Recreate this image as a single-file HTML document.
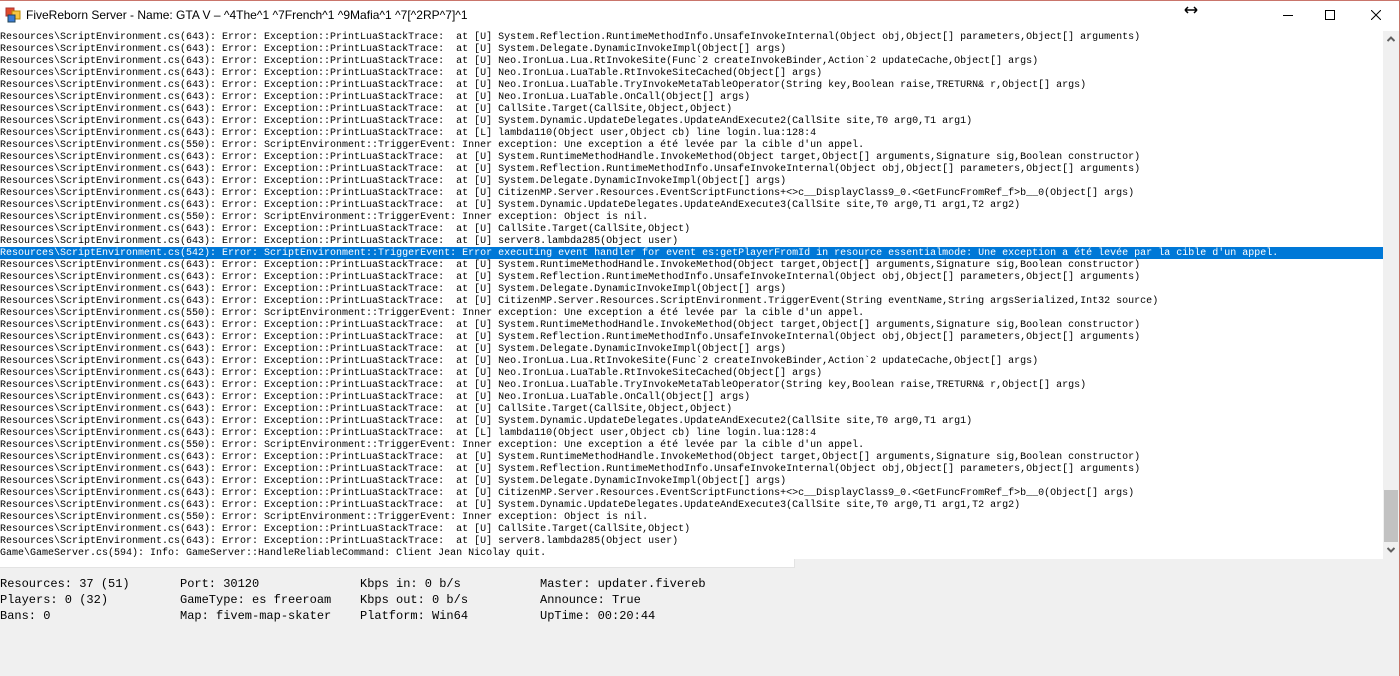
<!DOCTYPE html>
<html><head><meta charset="utf-8"><style>
*{margin:0;padding:0;box-sizing:border-box}
body{width:1400px;height:676px;background:#f0f0f0;position:relative;overflow:hidden;font-family:"Liberation Mono",monospace}
#border{position:absolute;left:0;top:0;width:1400px;height:676px;border:1px solid #c9756b;border-left:none;border-bottom:none;pointer-events:none;z-index:10}
#title{position:absolute;left:0;top:0;width:1400px;height:31px;background:#fff}
#title .t{position:absolute;left:26px;top:8px;font:12px "Liberation Sans",sans-serif;color:#000;white-space:pre}
#log{position:absolute;left:0;top:31px;width:1383px;height:528px;background:#fff;overflow:hidden}
#log div{height:12px;padding-top:2px;line-height:10px;font-size:10px;white-space:pre;color:#000;font-family:"Liberation Mono",monospace}
#log div.sel{background:#0078d7;color:#fff}
#lower{position:absolute;left:0;top:559px;width:795px;height:9px;background:#fff;border-bottom:1px solid #e3e3e3;border-right:1px solid #e3e3e3}
#sb{position:absolute;left:1383px;top:31px;width:16px;height:528px;background:#f0f0f0}
#thumb{position:absolute;left:1px;top:459px;width:14px;height:52px;background:#c2c2c2}
.st{position:absolute;font-size:12px;line-height:16px;white-space:pre;color:#000}
</style></head><body>
<div id="border"></div>
<div id="title">
<svg style="position:absolute;left:5px;top:7px" width="16" height="16" viewBox="0 0 16 16"><rect x="1" y="1" width="8" height="8" fill="#e04a2a" stroke="#a33" stroke-width="1"/><rect x="7" y="4" width="8" height="8" fill="#f5c542" stroke="#b80" /><rect x="3" y="8" width="7" height="7" fill="#3a7bd5" stroke="#245"/></svg>
<div class="t">FiveReborn Server - Name: GTA V – ^4The^1 ^7French^1 ^9Mafia^1 ^7[^2RP^7]^1</div>
<svg style="position:absolute;left:1184px;top:6px" width="14" height="8" viewBox="0 0 14 8"><path d="M1 4H13M1 4L4 1M1 4L4 7M13 4L10 1M13 4L10 7" stroke="#000" stroke-width="1.5" fill="none"/></svg>
<div style="position:absolute;left:1283px;top:15px;width:10px;height:1px;background:#000"></div>
<div style="position:absolute;left:1325px;top:10px;width:10px;height:10px;border:1px solid #000"></div>
<svg style="position:absolute;left:1371px;top:10px" width="10" height="10" viewBox="0 0 10 10"><path d="M0 0L10 10M10 0L0 10" stroke="#000" stroke-width="1"/></svg>
</div>
<div id="log">
<div>Resources\ScriptEnvironment.cs(643): Error: Exception::PrintLuaStackTrace:  at [U] System.Reflection.RuntimeMethodInfo.UnsafeInvokeInternal(Object obj,Object[] parameters,Object[] arguments)</div>
<div>Resources\ScriptEnvironment.cs(643): Error: Exception::PrintLuaStackTrace:  at [U] System.Delegate.DynamicInvokeImpl(Object[] args)</div>
<div>Resources\ScriptEnvironment.cs(643): Error: Exception::PrintLuaStackTrace:  at [U] Neo.IronLua.Lua.RtInvokeSite(Func`2 createInvokeBinder,Action`2 updateCache,Object[] args)</div>
<div>Resources\ScriptEnvironment.cs(643): Error: Exception::PrintLuaStackTrace:  at [U] Neo.IronLua.LuaTable.RtInvokeSiteCached(Object[] args)</div>
<div>Resources\ScriptEnvironment.cs(643): Error: Exception::PrintLuaStackTrace:  at [U] Neo.IronLua.LuaTable.TryInvokeMetaTableOperator(String key,Boolean raise,TRETURN&amp; r,Object[] args)</div>
<div>Resources\ScriptEnvironment.cs(643): Error: Exception::PrintLuaStackTrace:  at [U] Neo.IronLua.LuaTable.OnCall(Object[] args)</div>
<div>Resources\ScriptEnvironment.cs(643): Error: Exception::PrintLuaStackTrace:  at [U] CallSite.Target(CallSite,Object,Object)</div>
<div>Resources\ScriptEnvironment.cs(643): Error: Exception::PrintLuaStackTrace:  at [U] System.Dynamic.UpdateDelegates.UpdateAndExecute2(CallSite site,T0 arg0,T1 arg1)</div>
<div>Resources\ScriptEnvironment.cs(643): Error: Exception::PrintLuaStackTrace:  at [L] lambda110(Object user,Object cb) line login.lua:128:4</div>
<div>Resources\ScriptEnvironment.cs(550): Error: ScriptEnvironment::TriggerEvent: Inner exception: Une exception a été levée par la cible d'un appel.</div>
<div>Resources\ScriptEnvironment.cs(643): Error: Exception::PrintLuaStackTrace:  at [U] System.RuntimeMethodHandle.InvokeMethod(Object target,Object[] arguments,Signature sig,Boolean constructor)</div>
<div>Resources\ScriptEnvironment.cs(643): Error: Exception::PrintLuaStackTrace:  at [U] System.Reflection.RuntimeMethodInfo.UnsafeInvokeInternal(Object obj,Object[] parameters,Object[] arguments)</div>
<div>Resources\ScriptEnvironment.cs(643): Error: Exception::PrintLuaStackTrace:  at [U] System.Delegate.DynamicInvokeImpl(Object[] args)</div>
<div>Resources\ScriptEnvironment.cs(643): Error: Exception::PrintLuaStackTrace:  at [U] CitizenMP.Server.Resources.EventScriptFunctions+&lt;&gt;c__DisplayClass9_0.&lt;GetFuncFromRef_f&gt;b__0(Object[] args)</div>
<div>Resources\ScriptEnvironment.cs(643): Error: Exception::PrintLuaStackTrace:  at [U] System.Dynamic.UpdateDelegates.UpdateAndExecute3(CallSite site,T0 arg0,T1 arg1,T2 arg2)</div>
<div>Resources\ScriptEnvironment.cs(550): Error: ScriptEnvironment::TriggerEvent: Inner exception: Object is nil.</div>
<div>Resources\ScriptEnvironment.cs(643): Error: Exception::PrintLuaStackTrace:  at [U] CallSite.Target(CallSite,Object)</div>
<div>Resources\ScriptEnvironment.cs(643): Error: Exception::PrintLuaStackTrace:  at [U] server8.lambda285(Object user)</div>
<div class="sel">Resources\ScriptEnvironment.cs(542): Error: ScriptEnvironment::TriggerEvent: Error executing event handler for event es:getPlayerFromId in resource essentialmode: Une exception a été levée par la cible d'un appel.</div>
<div>Resources\ScriptEnvironment.cs(643): Error: Exception::PrintLuaStackTrace:  at [U] System.RuntimeMethodHandle.InvokeMethod(Object target,Object[] arguments,Signature sig,Boolean constructor)</div>
<div>Resources\ScriptEnvironment.cs(643): Error: Exception::PrintLuaStackTrace:  at [U] System.Reflection.RuntimeMethodInfo.UnsafeInvokeInternal(Object obj,Object[] parameters,Object[] arguments)</div>
<div>Resources\ScriptEnvironment.cs(643): Error: Exception::PrintLuaStackTrace:  at [U] System.Delegate.DynamicInvokeImpl(Object[] args)</div>
<div>Resources\ScriptEnvironment.cs(643): Error: Exception::PrintLuaStackTrace:  at [U] CitizenMP.Server.Resources.ScriptEnvironment.TriggerEvent(String eventName,String argsSerialized,Int32 source)</div>
<div>Resources\ScriptEnvironment.cs(550): Error: ScriptEnvironment::TriggerEvent: Inner exception: Une exception a été levée par la cible d'un appel.</div>
<div>Resources\ScriptEnvironment.cs(643): Error: Exception::PrintLuaStackTrace:  at [U] System.RuntimeMethodHandle.InvokeMethod(Object target,Object[] arguments,Signature sig,Boolean constructor)</div>
<div>Resources\ScriptEnvironment.cs(643): Error: Exception::PrintLuaStackTrace:  at [U] System.Reflection.RuntimeMethodInfo.UnsafeInvokeInternal(Object obj,Object[] parameters,Object[] arguments)</div>
<div>Resources\ScriptEnvironment.cs(643): Error: Exception::PrintLuaStackTrace:  at [U] System.Delegate.DynamicInvokeImpl(Object[] args)</div>
<div>Resources\ScriptEnvironment.cs(643): Error: Exception::PrintLuaStackTrace:  at [U] Neo.IronLua.Lua.RtInvokeSite(Func`2 createInvokeBinder,Action`2 updateCache,Object[] args)</div>
<div>Resources\ScriptEnvironment.cs(643): Error: Exception::PrintLuaStackTrace:  at [U] Neo.IronLua.LuaTable.RtInvokeSiteCached(Object[] args)</div>
<div>Resources\ScriptEnvironment.cs(643): Error: Exception::PrintLuaStackTrace:  at [U] Neo.IronLua.LuaTable.TryInvokeMetaTableOperator(String key,Boolean raise,TRETURN&amp; r,Object[] args)</div>
<div>Resources\ScriptEnvironment.cs(643): Error: Exception::PrintLuaStackTrace:  at [U] Neo.IronLua.LuaTable.OnCall(Object[] args)</div>
<div>Resources\ScriptEnvironment.cs(643): Error: Exception::PrintLuaStackTrace:  at [U] CallSite.Target(CallSite,Object,Object)</div>
<div>Resources\ScriptEnvironment.cs(643): Error: Exception::PrintLuaStackTrace:  at [U] System.Dynamic.UpdateDelegates.UpdateAndExecute2(CallSite site,T0 arg0,T1 arg1)</div>
<div>Resources\ScriptEnvironment.cs(643): Error: Exception::PrintLuaStackTrace:  at [L] lambda110(Object user,Object cb) line login.lua:128:4</div>
<div>Resources\ScriptEnvironment.cs(550): Error: ScriptEnvironment::TriggerEvent: Inner exception: Une exception a été levée par la cible d'un appel.</div>
<div>Resources\ScriptEnvironment.cs(643): Error: Exception::PrintLuaStackTrace:  at [U] System.RuntimeMethodHandle.InvokeMethod(Object target,Object[] arguments,Signature sig,Boolean constructor)</div>
<div>Resources\ScriptEnvironment.cs(643): Error: Exception::PrintLuaStackTrace:  at [U] System.Reflection.RuntimeMethodInfo.UnsafeInvokeInternal(Object obj,Object[] parameters,Object[] arguments)</div>
<div>Resources\ScriptEnvironment.cs(643): Error: Exception::PrintLuaStackTrace:  at [U] System.Delegate.DynamicInvokeImpl(Object[] args)</div>
<div>Resources\ScriptEnvironment.cs(643): Error: Exception::PrintLuaStackTrace:  at [U] CitizenMP.Server.Resources.EventScriptFunctions+&lt;&gt;c__DisplayClass9_0.&lt;GetFuncFromRef_f&gt;b__0(Object[] args)</div>
<div>Resources\ScriptEnvironment.cs(643): Error: Exception::PrintLuaStackTrace:  at [U] System.Dynamic.UpdateDelegates.UpdateAndExecute3(CallSite site,T0 arg0,T1 arg1,T2 arg2)</div>
<div>Resources\ScriptEnvironment.cs(550): Error: ScriptEnvironment::TriggerEvent: Inner exception: Object is nil.</div>
<div>Resources\ScriptEnvironment.cs(643): Error: Exception::PrintLuaStackTrace:  at [U] CallSite.Target(CallSite,Object)</div>
<div>Resources\ScriptEnvironment.cs(643): Error: Exception::PrintLuaStackTrace:  at [U] server8.lambda285(Object user)</div>
<div>Game\GameServer.cs(594): Info: GameServer::HandleReliableCommand: Client Jean Nicolay quit.</div>
</div>
<div id="lower"></div>
<div id="sb">
<svg style="position:absolute;left:4px;top:5px" width="8" height="6" viewBox="0 0 8 6"><path d="M0.5 5L4 1.5L7.5 5" stroke="#606060" stroke-width="2" fill="none"/></svg>
<div id="thumb"></div>
<svg style="position:absolute;left:4px;top:516px" width="8" height="6" viewBox="0 0 8 6"><path d="M0.5 1L4 4.5L7.5 1" stroke="#606060" stroke-width="2" fill="none"/></svg>
</div>
<div class="st" style="left:0;top:576px">Resources: 37 (51)
Players: 0 (32)
Bans: 0</div>
<div class="st" style="left:180px;top:576px">Port: 30120
GameType: es freeroam
Map: fivem-map-skater</div>
<div class="st" style="left:360px;top:576px">Kbps in: 0 b/s
Kbps out: 0 b/s
Platform: Win64</div>
<div class="st" style="left:540px;top:576px">Master: updater.fivereb
Announce: True
UpTime: 00:20:44</div>
</body></html>
